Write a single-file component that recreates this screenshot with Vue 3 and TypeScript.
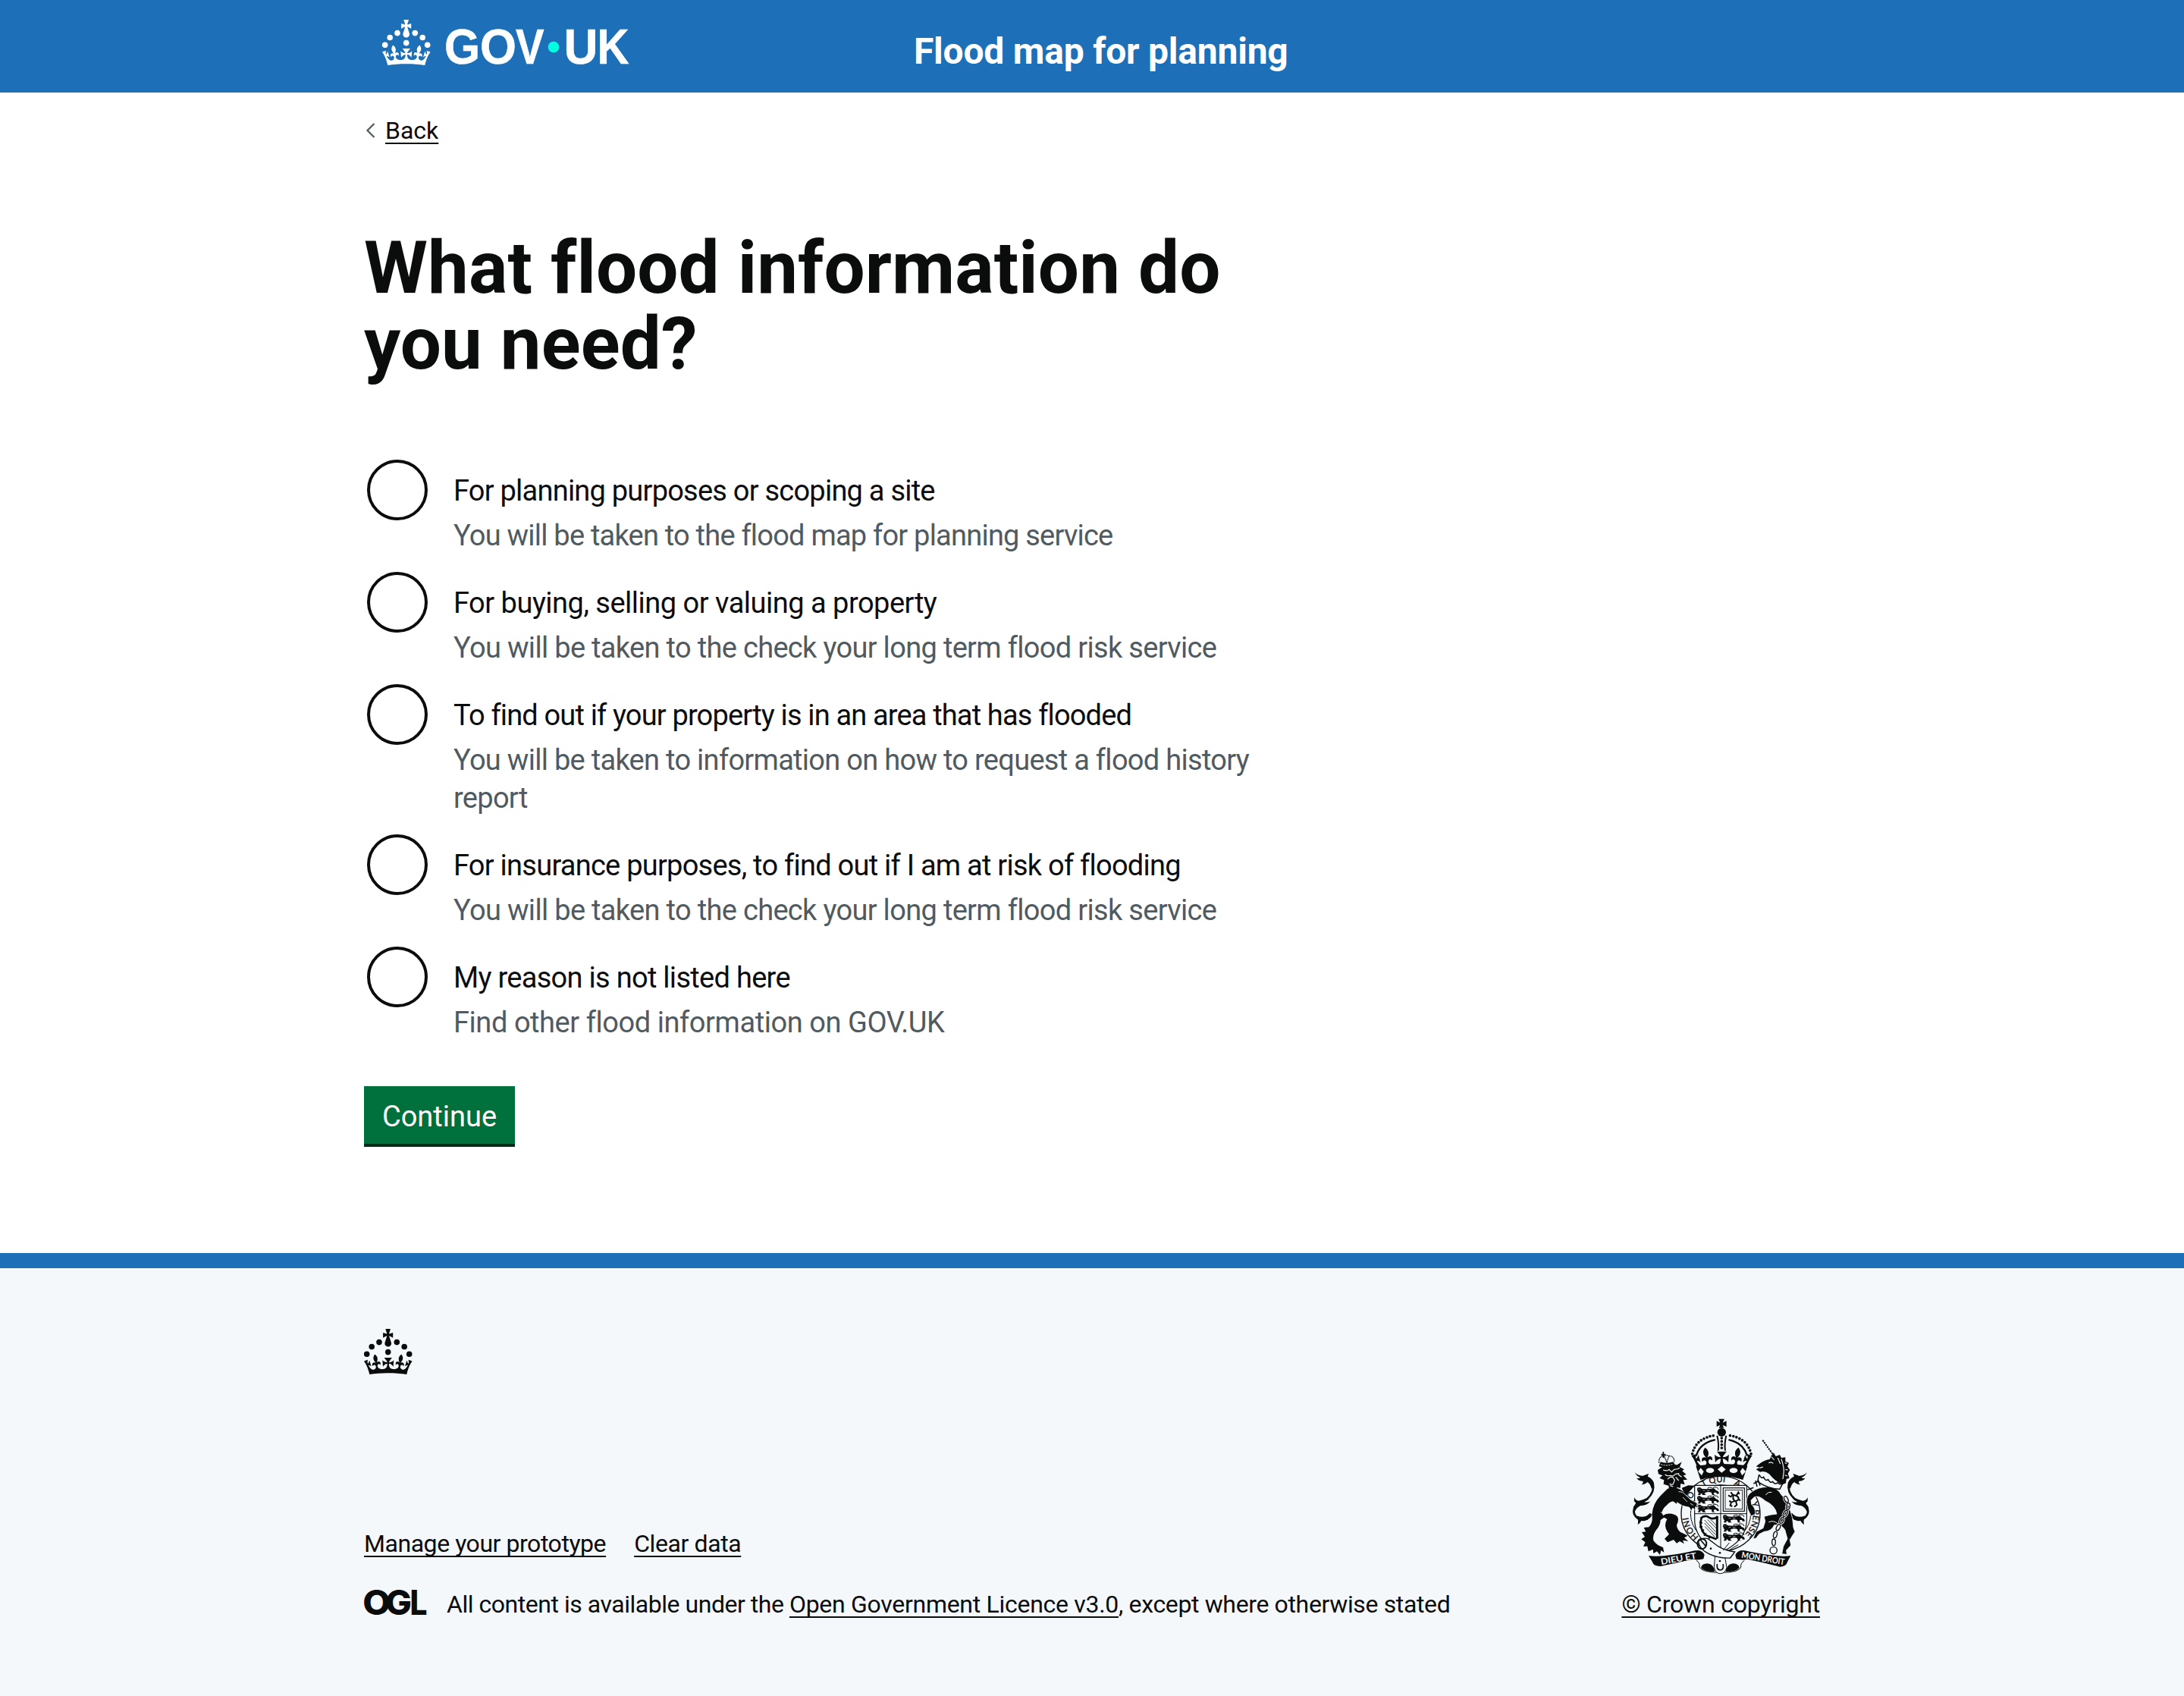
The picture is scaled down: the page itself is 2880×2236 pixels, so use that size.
<script setup lang="ts">
interface Option {
  id: string
  label: string
  labelTracking: number
  hint: string
  hintTracking: number
}

const options: Option[] = [
  { id: 'planning', label: 'For planning purposes or scoping a site', labelTracking: -0.77, hint: 'You will be taken to the flood map for planning service', hintTracking: -0.78 },
  { id: 'buying', label: 'For buying, selling or valuing a property', labelTracking: -0.5, hint: 'You will be taken to the check your long term flood risk service', hintTracking: -0.68 },
  { id: 'history', label: 'To find out if your property is in an area that has flooded', labelTracking: -0.84, hint: 'You will be taken to information on how to request a flood history report', hintTracking: -0.71 },
  { id: 'insurance', label: 'For insurance purposes, to find out if I am at risk of flooding', labelTracking: -0.75, hint: 'You will be taken to the check your long term flood risk service', hintTracking: -0.68 },
  { id: 'other', label: 'My reason is not listed here', labelTracking: -0.71, hint: 'Find other flood information on GOV.UK', hintTracking: -0.44 },
]

const crownPearls: [number, number][] = [
  [20, 17.6], [10.2, 23.5], [3.7, 33.2], [31.7, 30.6], [43.3, 17.6], [53.2, 23.5], [59.7, 33.2],
]
const crownPath =
  'M33.1,9.8c.2-.1.3-.3.5-.5l4.6,2.4v-6.8l-4.6,1.5c-.1-.2-.3-.3-.5-.5l1.9-5.9h-6.7l1.9,5.9c-.2.1-.3.3-.5.5l-4.6-1.5v6.8l4.6-2.4c.1.2.3.3.5.5l-2.6,8c-.9,2.8,1.2,5.7,4.1,5.7h0c3,0,5.1-2.9,4.1-5.7l-2.6-8ZM37,37.9s-3.4,3.8-4.1,6.1c2.2,0,4.2-.5,6.4-2.8l-.7,8.5c-2-2.8-4.4-4.1-5.7-3.8.1,3.1.5,6.7,5.8,7.2,3.7.3,6.7-1.5,7-3.8.4-2.6-2-4.3-3.7-1.6-1.4-4.5,2.4-6.1,4.9-3.2-1.9-4.5-1.8-7.7,2.4-10.9,3,4,2.6,7.3-1.2,11.1,2.4-1.3,6.2,0,4,4.6-1.2-2.8-3.7-2.2-4.2.2-.3,1.7.7,3.7,3,4.2,1.9.3,4.7-.9,7-5.9-1.3,0-2.4.7-3.9,1.7l2.4-8c.6,2.3,1.4,3.7,2.2,4.5.6-1.6.5-2.8,0-5.3l5,1.8c-2.6,3.6-5.2,8.7-7.3,17.5-7.4-1.1-15.7-1.7-24.5-1.7h0c-8.8,0-17.1.6-24.5,1.7-2.1-8.9-4.7-13.9-7.3-17.5l5-1.8c-.5,2.5-.6,3.7,0,5.3.8-.8,1.6-2.3,2.2-4.5l2.4,8c-1.5-1-2.6-1.7-3.9-1.7,2.3,5,5.2,6.2,7,5.9,2.3-.4,3.3-2.4,3-4.2-.5-2.4-3-3.1-4.2-.2-2.2-4.6,1.6-6,4-4.6-3.7-3.7-4.2-7.1-1.2-11.1,4.2,3.2,4.3,6.4,2.4,10.9,2.5-2.8,6.3-1.3,4.9,3.2-1.8-2.7-4.1-1-3.7,1.6.3,2.3,3.3,4.1,7,3.8,5.4-.5,5.7-4.2,5.8-7.2-1.3-.2-3.7,1-5.7,3.8l-.7-8.5c2.2,2.3,4.2,2.7,6.4,2.8-.7-2.3-4.1-6.1-4.1-6.1h10.6,0Z'

/* Top-left corners of the walking lions in the first and fourth quarters */
const lions: [number, number][] = [
  [356, 333], [356, 367], [356, 401], [458, 442], [458, 478], [458, 514],
]
/* x, y and rotation of each link of the unicorn's chain */
const links: [number, number, number][] = [
  [709, 380, -25], [717, 408, 10], [706, 436, 30], [692, 463, 25],
  [678, 491, 25], [666, 520, 15], [660, 550, 0],
]
</script>

<template>
  <div class="page">
    <header class="header">
      <div class="container header-row">
        <svg class="logo" viewBox="0 0 330 76" width="330" height="76" role="img" aria-label="GOV.UK">
          <g fill="#fff">
            <circle v-for="([x, y], i) in crownPearls" :key="i" :cx="x" :cy="y" r="3.8" />
            <path :d="crownPath" />
            <g class="logo-text">
              <text x="82" y="58" textLength="47" lengthAdjust="spacingAndGlyphs">G</text>
              <text x="129" y="58" textLength="48" lengthAdjust="spacingAndGlyphs">O</text>
              <text x="176" y="58" textLength="37.500" lengthAdjust="spacingAndGlyphs">V</text>
              <text x="239.500" y="58" textLength="45" lengthAdjust="spacingAndGlyphs">U</text>
              <text x="283.500" y="58" textLength="42" lengthAdjust="spacingAndGlyphs">K</text>
            </g>
          </g>
          <circle cx="226" cy="36" r="7.3" fill="#00ffe0" />
        </svg>
        <span class="service">Flood map for planning</span>
      </div>
    </header>

    <main class="container main">
      <a class="back">
        <svg viewBox="0 0 14 22" width="14" height="22"><path d="M11.500 2 2.500 11l9 9" fill="none" stroke="#505a5f" stroke-width="2.200" /></svg>
        <span class="link">Back</span>
      </a>
      <h1 class="title">What flood information do you need?</h1>
      <div class="radios">
        <label v-for="o in options" :key="o.id" class="radio">
          <span class="ring"></span>
          <span class="copy">
            <span class="label" :style="{ letterSpacing: o.labelTracking + 'px' }">{{ o.label }}</span>
            <span class="hint" :style="{ letterSpacing: o.hintTracking + 'px' }">{{ o.hint }}</span>
          </span>
        </label>
      </div>
      <button class="button" type="button">Continue</button>
    </main>

    <footer class="footer">
      <div class="container footer-inner">
        <svg class="crown" viewBox="0 0 64 60" width="64" height="60">
          <circle v-for="([x, y], i) in crownPearls" :key="i" :cx="x" :cy="y" r="3.8" />
          <path :d="crownPath" />
        </svg>
        <div class="footer-row">
          <div class="footer-left">
            <div class="meta">
              <a class="link manage">Manage your prototype</a>
              <a class="link clear">Clear data</a>
            </div>
            <div class="licence">
              <svg class="ogl" viewBox="0 0 83 34" width="83" height="34" role="img" aria-label="OGL">
                <text x="-1.800" y="33.500" textLength="37" lengthAdjust="spacingAndGlyphs">O</text>
                <text x="28" y="33.500" textLength="35" lengthAdjust="spacingAndGlyphs">G</text>
                <text x="60.500" y="33.500" textLength="23" lengthAdjust="spacingAndGlyphs">L</text>
              </svg>
              <p class="licence-text"><span class="t1">All content is available under the </span><a class="link t2">Open Government Licence v3.0</a><span class="t3">, except where otherwise stated</span></p>
            </div>
          </div>
          <a class="copyright">
            <svg class="crest" viewBox="75 51 750 630" width="250" height="210">
              <defs>
                <clipPath id="circlet"><rect x="-2" y="29" width="70" height="34" /></clipPath>
                <path id="garter" d="M450 560A129 124 0 0 1 321 436A129 124 0 0 1 450 312A129 124 0 0 1 579 436A129 124 0 0 1 450 560" />
                <g id="tail">
                  <path d="M174 444Q150 470 126 458Q98 440 110 412Q125 394 160 378Q190 350 182 316Q176 300 160 294" fill="none" stroke="#0b0c0c" stroke-width="8" />
                  <path d="M111 274Q124 288 142 287L166 278Q158 290 166 297Q182 305 185 330L176 338Q172 318 160 312Q150 322 136 322Q146 314 142 308Q126 308 117 296Q128 298 132 294Q116 288 111 274Z" />
                  <path d="M108 372Q114 386 126 386L168 374Q160 386 148 391Q164 393 172 388Q158 406 134 405Q118 410 110 430Q98 415 112 400Q118 396 108 388Z" />
                  <path d="M118 445Q126 462 122 480Q132 474 138 462L160 462L178 440L170 434Q150 458 118 445Z" />
                </g>
                <g id="lion">
                  <path d="M2 5Q8-1 15 2L21 6L40 7L58 5Q64 2 70 5L76 12L84 15L88 24L80 26L76 20L68 20L66 27L74 30H60L58 20Q46 16 34 20L30 24L36 30H22L20 24L12 26L16 30H4L8 20L2 18L8 12Z" />
                  <path d="M66 7Q60-2 72-1Q86 0 84 8M44 8Q40 1 50 0L60 1" fill="none" stroke="#0b0c0c" stroke-width="3" />
                  <circle cx="9" cy="8" r="8" />
                  <path d="M5 7h3M11 8h3M24 13h8M40 13h10" stroke="#f4f8fb" stroke-width="1.800" />
                </g>
              </defs>

              <!-- supporters' tails -->
              <use href="#tail" />
              <use href="#tail" transform="translate(902) scale(-1 1)" />

              <!-- lion -->
              <path d="M296 335L322 325L352 326L310 366Z" />
              <path d="M240 338Q275 328 300 348L335 382L330 412L300 406L270 388Q250 386 238 402Q210 425 222 444Q242 432 266 440Q292 448 276 482Q278 506 300 514L320 524L306 532L322 546L300 542L306 556L288 546L276 554L264 540L240 550L228 536L246 518L238 506Q224 484 238 458L226 452L212 462Q212 482 196 500Q180 520 184 542Q196 562 222 570L226 590L214 582L210 600L198 586L184 594L182 578L164 586L160 566L144 566L152 550L136 538L150 528L138 510L154 508L146 492L166 490Q184 470 178 440Q182 396 214 364Z" />
              <path d="M201 264L216 254Q250 238 278 244L296 232L288 252L306 262L298 268L314 282L302 286L318 302L302 304L308 322L292 318L290 336L278 332L268 350L256 338L246 342L244 326L224 320L226 304L208 296L220 286L204 280Z" />
              <path d="M222 264Q240 270 246 262L256 272L266 262Q280 262 288 256M230 282Q240 290 250 286L262 288L272 280L286 278M240 300L250 292L260 292L268 304L262 320Q254 324 248 318M272 292L284 306M282 282L296 292M250 326L262 330M226 440L214 430" fill="none" stroke="#f4f8fb" stroke-width="3.500" />
              <path d="M206 250L212 232Q236 240 262 232L270 244Q240 262 206 250Z" />
              <path d="M206 236Q204 210 226 208Q236 204 246 208Q268 210 266 232M226 208L238 236M246 208L236 236" fill="none" stroke="#0b0c0c" stroke-width="4" stroke-dasharray="5 2" />
              <path d="M220 192h6l-1 8h7v6h-7l2 10h-6l-1-10h-5v-6h6z" />
              <path d="M214 242Q238 250 262 240" fill="none" stroke="#f4f8fb" stroke-width="3" stroke-dasharray="6 4" />

              <!-- garter -->
              <ellipse cx="450" cy="437" rx="156" ry="148" fill="#f4f8fb" stroke="#0b0c0c" stroke-width="4" />
              <ellipse cx="450" cy="437" rx="119" ry="114" fill="none" stroke="#0b0c0c" stroke-width="3" />
              <g class="garter-text">
                <text><textPath href="#garter" startOffset="94">HONI</textPath></text>
                <text><textPath href="#garter" startOffset="236">SO</textPath></text>
                <text><textPath href="#garter" startOffset="324">T QUI</textPath></text>
                <text><textPath href="#garter" startOffset="450">A</textPath></text>
                <text><textPath href="#garter" startOffset="552">Y PENSE</textPath></text>
              </g>

              <!-- shield -->
              <path d="M347 325H553V460Q553 545 450 590Q347 545 347 460Z" fill="#f4f8fb" stroke="#0b0c0c" stroke-width="3.500" />
              <path d="M450 325V588M347 437H553" stroke="#0b0c0c" stroke-width="3" />
              <use v-for="([x, y], i) in lions" :key="i" href="#lion" :transform="`translate(${x} ${y})`" />
              <g fill="none" stroke="#0b0c0c">
                <rect x="460" y="335" width="84" height="92" stroke-width="3.500" />
                <rect x="468" y="343" width="68" height="76" stroke-width="2.500" />
                <path d="M490 352L498 362L490 370L480 364M498 362L512 366L520 352L524 360M500 366Q496 384 510 388L522 380L528 386M510 388L514 402L504 410M508 386L492 392L484 386M492 392L488 404L496 408M512 366Q524 372 520 382" stroke-width="6" />
                <path d="M370 456Q388 440 404 452Q418 462 438 450M374 456Q366 480 376 500Q384 520 400 526L434 538" stroke-width="8" />
                <path d="M366 470l12 4M366 490l12-2M374 508l10-8M384 524l8-10M404 536l4-12" stroke-width="5" />
                <path d="M436 446V536" stroke-width="9" />
                <path d="M386 462L430 508M386 474L430 520M388 488L426 528M398 460L432 494M410 460L432 482" stroke-width="2.500" />
              </g>

              <!-- lion's outstretched foreleg -->
              <path d="M268 352Q290 346 304 356L332 382L352 392L362 402L354 402L362 414L350 410L350 424L340 414L334 426L326 412L300 406L274 390Z" stroke="#f4f8fb" stroke-width="2.500" />
              <path d="M262 346L284 344L276 398L262 388Z" />
              <path d="M300 372L318 390M330 396L342 404" stroke="#f4f8fb" stroke-width="2.500" />

              <!-- crown -->
              <path d="M442 62h23l-7 15 15-7v23l-15-7 5 12h-20l5-12-14 7V70l14 7z" />
              <circle cx="454" cy="115" r="17" />
              <path d="M436 128Q444 160 440 188M472 128Q464 160 468 188" fill="none" stroke="#0b0c0c" stroke-width="6" />
              <path d="M454 138V186" stroke="#0b0c0c" stroke-width="11" stroke-linecap="round" stroke-dasharray="0 13" />
              <g fill="none" stroke="#0b0c0c" stroke-linecap="round">
                <path d="M338 200Q352 138 428 127M570 200Q556 138 482 127" stroke-width="11" stroke-dasharray="0 13" />
                <path d="M354 206Q368 158 426 145M554 206Q540 158 484 145" stroke-width="7" />
              </g>
              <g transform="translate(334.500 54) scale(3.770 3.620)"><path :d="crownPath" clip-path="url(#circlet)" /></g>
              <path d="M352 248Q454 232 556 248L538 303Q454 274 370 303Z" />
              <g fill="#f4f8fb">
                <ellipse cx="408" cy="266" rx="16" ry="10" />
                <ellipse cx="501" cy="266" rx="16" ry="10" />
                <path d="M454 248l16 14-16 13-16-13zM371 256l12 14-8 16-14-16zM537 256l12 14-14 16-8-16z" />
              </g>

              <!-- unicorn -->
              <path d="M552 392Q552 362 574 350Q598 332 634 331Q676 332 690 362Q716 384 724 420Q736 450 738 492L744 508L724 540L728 562L710 582L712 598L692 596L698 566L714 536L704 500Q690 478 662 482Q652 506 622 508L602 518L590 534L578 536L590 508L618 494L626 468L622 448Q646 440 672 438Q666 404 626 386Q600 362 582 372L570 384L572 400Q592 420 586 440L570 446L558 420Z" stroke="#f4f8fb" stroke-width="2.500" />
              <path d="M660 196L668 210L684 204L690 216L706 214L706 230L720 236L714 250L724 264L716 278L722 296L710 300L708 316L694 322Q664 308 642 280Q624 266 606 272L590 262L604 254L590 250L606 238Q624 224 644 222L650 208Z" />
              <path d="M640 236Q650 230 658 238M604 256L618 252M690 220Q700 250 700 270M676 216L686 240M700 270L696 300M650 212L662 224M704 236L712 238M706 262L716 264M704 284L714 288" fill="none" stroke="#f4f8fb" stroke-width="3.500" />
              <path d="M616 146L658 204" stroke="#0b0c0c" stroke-width="6" stroke-dasharray="7 3" />
              <path d="M602 282L596 310Q640 340 684 340L694 320M604 284Q610 300 620 292Q626 310 638 302Q646 318 656 310Q664 324 676 314Q684 324 692 318M580 318L600 308L606 326M588 306L594 330M556 342L580 334" fill="none" stroke="#0b0c0c" stroke-width="4.500" />
              <path d="M652 352Q640 348 628 362M640 470Q660 462 676 476" fill="none" stroke="#f4f8fb" stroke-width="3" />
              <g fill="none">
                <ellipse v-for="([x, y, r], i) in links" :key="i" :cx="x" :cy="y" rx="7" ry="13" :transform="`rotate(${r} ${x} ${y})`" stroke="#f4f8fb" stroke-width="9" />
                <ellipse v-for="([x, y, r], i) in links" :key="i + 20" :cx="x" :cy="y" rx="7" ry="13" :transform="`rotate(${r} ${x} ${y})`" stroke="#0b0c0c" stroke-width="4" />
                <circle cx="659" cy="582" r="14" stroke="#0b0c0c" stroke-width="4" />
              </g>

              <!-- scroll -->
              <path d="M165 603Q220 612 348 583Q376 578 386 600L382 616Q360 622 340 617Q280 630 212 645Q184 645 180 628Z" />
              <path d="M727 603Q680 612 546 583Q520 578 508 600L512 616Q534 622 556 617Q620 630 686 647Q710 645 714 628Z" />
              <g class="scroll-text">
                <text transform="translate(215 639) rotate(-10)" textLength="142" lengthAdjust="spacingAndGlyphs">DIEU ET</text>
                <text transform="translate(531 611) rotate(9.500)" textLength="172" lengthAdjust="spacingAndGlyphs">MON DROIT</text>
              </g>
              <path d="M354 622Q370 632 366 648Q376 670 450 670Q524 670 530 648Q528 632 544 622" fill="none" stroke="#0b0c0c" stroke-width="3" />
              <path d="M372 652Q374 634 398 634Q424 636 426 666Q390 668 372 652Z M524 652Q522 634 498 634Q474 636 470 666Q508 668 524 652Z" />

              <!-- belt -->
              <path d="M428 604L424 650Q430 674 448 674Q468 674 474 650L466 604Z" fill="#f4f8fb" stroke="#0b0c0c" stroke-width="3" />
              <path d="M436 636V650Q440 660 448 660Q458 660 460 650V636" fill="none" stroke="#0b0c0c" stroke-width="5" />
              <path d="M362 548Q372 530 400 536L440 566Q470 584 506 588L488 612Q440 614 404 596Q366 578 362 548Z" fill="#f4f8fb" stroke="#0b0c0c" stroke-width="4" />
              <path d="M460 582L484 552M520 560Q500 570 480 584" fill="none" stroke="#0b0c0c" stroke-width="3" />
              <ellipse cx="376" cy="556" rx="18" ry="20" fill="none" stroke="#0b0c0c" stroke-width="6" />
              <path d="M370 540L392 566" stroke="#0b0c0c" stroke-width="5" />
              <circle cx="411" cy="575" r="4" /><circle cx="447" cy="592" r="4" /><circle cx="447" cy="624" r="4" />
            </svg>
            <span class="link">© Crown copyright</span>
          </a>
        </div>
      </div>
    </footer>
  </div>
</template>

<style>
body {
  margin: 0;
}
</style>

<style scoped>
.page {
  display: flex;
  flex-direction: column;
  min-height: 2236px;
  background: #fff;
  color: #0b0c0c;
  font-family: Roboto, 'Liberation Sans', sans-serif;
  font-size: 32px;
  line-height: 40px;
}
.container {
  width: 1920px;
  margin: 0 auto;
  box-sizing: border-box;
}
.header {
  background: #1d70b8;
  height: 122px;
}
.header-row {
  display: flex;
  align-items: flex-start;
  padding: 26px 0 0 24px;
}
.logo {
  display: block;
  overflow: visible;
}
.logo-text {
  font-family: 'Liberation Sans', sans-serif;
  font-weight: 700;
  font-size: 64px;
  stroke: #fff;
  stroke-width: 0.6px;
}
.service {
  margin: 18px 0 0 371px;
  color: #fff;
  font-size: 48px;
  line-height: 48px;
  font-weight: 700;
  letter-spacing: -0.22px;
}
.main {
  height: 1530px;
  padding-top: 30px;
}
.link {
  text-decoration: underline;
  text-decoration-thickness: 2px;
  text-decoration-skip-ink: none;
  text-underline-offset: 5px;
}
.back {
  display: flex;
  align-items: center;
  gap: 12px;
  height: 40px;
  padding-left: 2px;
}
.title {
  width: 1240px;
  margin: 111px 0 103px;
  font-size: 96px;
  line-height: 100px;
  font-weight: 700;
  letter-spacing: 0.1px;
}
.radios {
  display: flex;
  flex-direction: column;
  gap: 24px;
  width: 1220px;
}
.radio {
  display: flex;
  gap: 34px;
  padding-left: 4px;
}
.ring {
  flex: none;
  box-sizing: border-box;
  width: 80px;
  height: 80px;
  border: 4px solid #0b0c0c;
  border-radius: 50%;
}
.copy {
  display: flex;
  flex-direction: column;
  gap: 9px;
  width: 1080px;
  margin-bottom: -1px;
  padding-top: 16px;
  font-size: 38px;
  line-height: 50px;
}
.hint {
  color: #505a5f;
}
.button {
  display: block;
  width: 199px;
  height: 76px;
  margin-top: 60px;
  padding: 3px 0 0;
  border: 0;
  background: #00703c;
  box-shadow: 0 4px 0 #002d18;
  color: #fff;
  font: 400 38px/38px Roboto, sans-serif;
}
.footer {
  flex: 1;
  border-top: 20px solid #1d70b8;
  background: #f4f8fb;
}
.footer-inner {
  padding-top: 80px;
}
.crown {
  display: block;
  fill: #0b0c0c;
}
.footer-row {
  display: flex;
  align-items: flex-end;
  justify-content: space-between;
  margin-top: 55px;
}
.meta {
  display: flex;
  gap: 37px;
  margin-bottom: 40px;
}
.manage {
  letter-spacing: -0.45px;
}
.clear {
  letter-spacing: -0.4px;
}
.licence {
  display: flex;
  gap: 26px;
}
.ogl {
  display: block;
  overflow: visible;
  font-family: Inter, sans-serif;
  font-weight: 800;
  font-size: 45px;
  fill: #0b0c0c;
}
.licence-text {
  margin: 0;
  white-space: pre;
}
.t1 {
  letter-spacing: -0.47px;
}
.t2 {
  letter-spacing: -0.29px;
}
.t3 {
  letter-spacing: -0.36px;
}
.copyright {
  display: flex;
  flex-direction: column;
  align-items: center;
  gap: 18px;
  letter-spacing: -0.2px;
}
.crest {
  display: block;
  fill: #0b0c0c;
}
.garter-text {
  font-family: Lato, sans-serif;
  font-size: 33px;
  letter-spacing: 1px;
  stroke: #0b0c0c;
  stroke-width: 1px;
}
.scroll-text {
  font-family: Lato, sans-serif;
  font-weight: 700;
  font-size: 34px;
  fill: #f4f8fb;
}
</style>
